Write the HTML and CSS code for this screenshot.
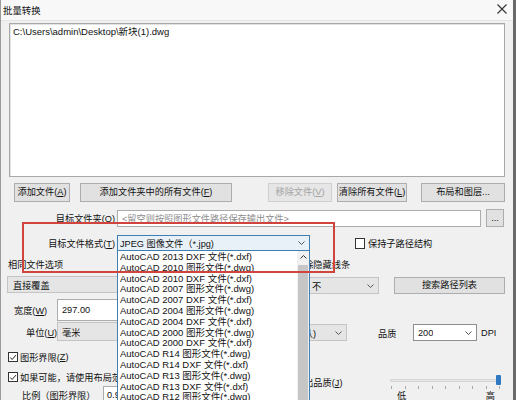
FILE: index.html
```html
<!DOCTYPE html>
<html lang="zh-CN">
<head>
<meta charset="utf-8">
<title>批量转换</title>
<link rel="stylesheet" href="styles.css">
</head>
<body>
<div class="win">
  <div class="titlebar">
    <span class="title">批量转换</span>
    <svg class="close" width="10" height="10" viewBox="0 0 10 10"><path d="M0.5 0.5 L9.5 9.5 M9.5 0.5 L0.5 9.5" stroke="#333" stroke-width="1.1" fill="none"/></svg>
  </div>

  <div class="filelist">
    <div class="file">C:\Users\admin\Desktop\新块(1).dwg</div>
  </div>

  <div class="btnrow">
    <button class="btn b1">添加文件(<u>A</u>)</button>
    <button class="btn b2">添加文件夹中的所有文件(<u>F</u>)</button>
    <button class="btn b3 disabled">移除文件(<u>V</u>)</button>
    <button class="btn b4">清除所有文件(<u>L</u>)</button>
    <button class="btn b5">布局和图层...</button>
  </div>

  <div class="row folder">
    <span class="lbl">目标文件夹(<u>O</u>)</span>
    <div class="input path">&lt;留空则按照图形文件路径保存输出文件&gt;</div>
    <button class="btn dots">...</button>
  </div>

  <div class="row format">
    <span class="lbl">目标文件格式(<u>T</u>)</span>
    <div class="fmtwrap">
      <div class="combo active">
        <span class="val">JPEG 图像文件（*.jpg)</span>
        <svg class="chev" width="7" height="4" viewBox="0 0 7 4"><path d="M0.5 0.5 L3.5 3.5 L6.5 0.5" stroke="#555" fill="none"/></svg>
      </div>
      <div class="dropdown">
        <div class="items">
          <div>AutoCAD 2013 DXF 文件(*.dxf)</div>
          <div>AutoCAD 2010 图形文件(*.dwg)</div>
          <div>AutoCAD 2010 DXF 文件(*.dxf)</div>
          <div>AutoCAD 2007 图形文件(*.dwg)</div>
          <div>AutoCAD 2007 DXF 文件(*.dxf)</div>
          <div>AutoCAD 2004 图形文件(*.dwg)</div>
          <div>AutoCAD 2004 DXF 文件(*.dxf)</div>
          <div>AutoCAD 2000 图形文件(*.dwg)</div>
          <div>AutoCAD 2000 DXF 文件(*.dxf)</div>
          <div>AutoCAD R14 图形文件(*.dwg)</div>
          <div>AutoCAD R14 DXF 文件(*.dxf)</div>
          <div>AutoCAD R13 图形文件(*.dwg)</div>
          <div>AutoCAD R13 DXF 文件(*.dxf)</div>
          <div>AutoCAD R12 图形文件(*.dwg)</div>
        </div>
        <div class="sbar">
          <svg class="up" width="7" height="4" viewBox="0 0 7 4"><path d="M0.5 3.5 L3.5 0.5 L6.5 3.5" stroke="#333" fill="none"/></svg>
          <div class="thumb"></div>
        </div>
      </div>
    </div>
    <label class="chk keep"><span class="box"></span>保持子路径结构</label>
  </div>

  <div class="lower">
    <div class="lcol">
      <div class="l1">相同文件选项</div>
      <div class="combo gray l2"><span class="val">直接覆盖</span></div>
      <div class="l3">
        <span class="lbl w">宽度(<u>W</u>)</span>
        <div class="input num">297.00</div>
      </div>
      <div class="l4">
        <span class="lbl u">单位(<u>U</u>)</span>
        <div class="combo gray unit"><span class="val">毫米</span>
          <svg class="chev" width="7" height="4" viewBox="0 0 7 4"><path d="M0.5 0.5 L3.5 3.5 L6.5 0.5" stroke="#555" fill="none"/></svg>
        </div>
      </div>
      <label class="chk l5"><span class="box on"><svg width="9" height="9" viewBox="0 0 9 9"><path d="M1.5 4.5 L3.5 6.8 L7.8 1.8" stroke="#222" stroke-width="1.1" fill="none"/></svg></span>图形界限(<u>Z</u>)</label>
      <label class="chk l6"><span class="box on"><svg width="9" height="9" viewBox="0 0 9 9"><path d="M1.5 4.5 L3.5 6.8 L7.8 1.8" stroke="#222" stroke-width="1.1" fill="none"/></svg></span>如果可能，请使用布局范围</label>
      <div class="l7">
        <span class="lbl s">比例（图形界限）</span>
        <div class="input scale">0.9</div>
      </div>
    </div>

    <div class="rcol">
      <div class="r1">消除隐藏线条</div>
      <div class="r2">
        <div class="combo gray hid"><span class="val">不</span>
          <svg class="chev" width="7" height="4" viewBox="0 0 7 4"><path d="M0.5 0.5 L3.5 3.5 L6.5 0.5" stroke="#555" fill="none"/></svg>
        </div>
        <button class="btn search">搜索路径列表</button>
      </div>
      <div class="r3">
        <div class="combo gray bg"><span class="val end"><span>白色(默认)</span></span>
          <svg class="chev" width="7" height="4" viewBox="0 0 7 4"><path d="M0.5 0.5 L3.5 3.5 L6.5 0.5" stroke="#555" fill="none"/></svg>
        </div>
        <span class="q">品质</span>
        <div class="combo white dpi"><span class="val">200</span>
          <svg class="chev" width="7" height="4" viewBox="0 0 7 4"><path d="M0.5 0.5 L3.5 3.5 L6.5 0.5" stroke="#555" fill="none"/></svg>
        </div>
        <span class="dpiu">DPI</span>
      </div>
      <div class="r4">
        <span class="ql">输出品质(<u>J</u>)</span>
        <div class="slider">
          <div class="track"></div>
          <div class="knob"></div>
          <div class="ticks"><i></i><i></i><i></i><i></i><i></i><i></i><i></i><i></i><i></i></div>
        </div>
      </div>
      <div class="r5"><span>低</span><span>高</span></div>
    </div>
  </div>

  <div class="annot"></div>
</div>
</body>
</html>
```

FILE: styles.css
```css
* { box-sizing: border-box; }
html, body { margin: 0; padding: 0; }
body {
  width: 516px; height: 400px; overflow: hidden;
  background: #f0f0f0;
  font-family: "Liberation Sans", "Noto Sans CJK SC", sans-serif;
  font-size: 9.2px; color: #111;
}
u { text-decoration: underline; text-underline-offset: 1px; }
.win {
  position: relative;
  width: 516px; height: 400px;
  border-left: 1px solid #9a9a9a;
  border-right: 3px solid #6a6a6a;
}
.titlebar {
  height: 21px; background: #f8f8f8;
  border-bottom: 1px solid #e4e4e4;
  display: flex; align-items: center; justify-content: space-between;
  padding: 0 6px 1px 2px;
}
.title { font-size: 9.4px; }
.close { margin-top: -2px; }

.filelist {
  margin: 2px 0 0 8px; width: 496px; height: 154px;
  background: #fff; border: 1px solid #a8a8a8;
  box-shadow: inset 1px 1px 0 #e2e2e2;
  padding: 2px 3px;
}
.file { line-height: 12px; font-size: 9.5px; }

.btnrow { display: flex; margin-top: 6px; height: 19px; }
.btn {
  font: inherit; color: #111; white-space: nowrap;
  background: #e1e1e1; border: 1px solid #adadad;
  padding: 0; height: 19px; line-height: 17px; text-align: center;
}
.b1 { margin-left: 13px; width: 56px; }
.b2 { margin-left: 10px; width: 152px; }
.b3 { margin-left: 36px; width: 64px; }
.b4 { margin-left: 5px; width: 70px; }
.b5 { margin-left: 14px; width: 84px; }
.disabled { color: #a3a3a3; border-color: #cfcfcf; background: #e6e6e6; }

.row { display: flex; align-items: center; }
.lbl { white-space: nowrap; }
.folder { margin-top: 7px; height: 18px; }
.folder .lbl { width: 115px; text-align: right; padding-right: 1px; }
.input {
  background: #fff; border: 1px solid #acacac;
  display: flex; align-items: center; padding-left: 4px;
  white-space: nowrap; overflow: hidden;
}
.path { width: 364px; height: 17px; color: #8d8d8d; margin-left: 1px; }
.dots { width: 18px; height: 18px; margin-left: 5px; line-height: 14px; }

.format { margin-top: 8px; height: 16px; }
.format .lbl { width: 115px; text-align: right; padding-right: 1px; }
.fmtwrap { position: relative; margin-left: 1px; width: 193px; height: 16px; z-index: 5; }
.combo {
  display: flex; align-items: center; justify-content: space-between;
  border: 1px solid #acacac; padding: 0 4px 0 4px; white-space: nowrap;
}
.combo .val { overflow: hidden; }
.combo.active { height: 16px; background: #e9f1f8; border-color: #3f7fb3; padding-left: 2px; }
.combo.gray { background: #e5e5e5; border-color: #c4c4c4; }
.combo.white { background: #fff; border-color: #8e8e8e; }

.dropdown {
  position: absolute; left: 0; top: 16px; width: 193px; height: 160px;
  background: #fff; border: 1px solid #3f7fb3; border-top: none;
  display: flex;
}
.items { flex: 1; padding: 1px 0 0 2px; font-size: 9.5px; }
.items div { height: 10.8px; line-height: 10.8px; white-space: nowrap; }
.sbar { width: 12px; background: #f0f0f0; display: flex; flex-direction: column; align-items: center; }
.up { margin-top: 4px; }
.thumb { margin-top: 6px; width: 10px; flex: 1; background: #c6c6c6; }

.chk { display: flex; align-items: center; white-space: nowrap; }
.box {
  width: 10px; height: 10px; border: 1px solid #333; background: #fff;
  display: inline-flex; align-items: center; justify-content: center; margin-right: 2px;
}
.box svg { display: block; }
.keep { margin-left: 45px; }
.keep .box { width: 10px; height: 11px; margin-right: 3px; }

.lower { display: grid; grid-template-columns: 239px 273px; }
.lcol, .rcol { display: flex; flex-direction: column; }

.l1 { margin: 7px 0 0 7px; height: 14px; line-height: 14px; }
.l2 { margin: 4px 0 0 6px; width: 160px; height: 17px; padding-left: 5px; }
.l3 { margin-top: 6px; height: 22px; display: flex; align-items: center; }
.lbl.w { margin-left: 13px; width: 43px; }
.num { margin-left: 0; width: 150px; height: 22px; padding-left: 4px; }
.l4 { margin-top: 1px; height: 19px; display: flex; align-items: center; }
.lbl.u { margin-left: 25px; width: 31px; }
.unit { width: 150px; height: 19px; }
.l5 { margin: 10px 0 0 7px; height: 12px; }
.l6 { margin: 8px 0 0 7px; height: 12px; }
.l7 { margin-top: 3px; height: 18px; display: flex; align-items: center; }
.lbl.s { margin-left: 21px; width: 81px; }
.scale { width: 100px; height: 18px; padding-left: 3px; }

.r1 { margin: 7px 0 0 55px; height: 14px; line-height: 14px; white-space: nowrap; }
.r2 { margin-top: 5px; height: 17px; display: flex; align-items: center; }
.hid { margin-left: 66px; width: 73px; height: 17px; padding-left: 5px; }
.search { margin-left: 15px; width: 111px; height: 17px; line-height: 15px; }
.r3 { margin-top: 30px; height: 17px; display: flex; align-items: center; }
.bg { width: 107px; height: 17px; padding-left: 0; }
.val.end { display: flex; justify-content: flex-end; width: 75px; }
.q { margin-left: 31px; width: 35px; }
.dpi { width: 64px; height: 17px; }
.dpiu { margin-left: 4px; }
.r4 { margin-top: 34px; height: 14px; display: flex; align-items: center; }
.ql { margin-left: 55px; width: 95px; white-space: nowrap; }
.slider { position: relative; width: 112px; height: 14px; }
.track { position: absolute; left: 0; top: 4px; width: 111px; height: 3px; background: #e7e7e7; border: 1px solid #d6d6d6; }
.knob { position: absolute; left: 106px; top: 0; width: 5px; height: 10px; background: #2f79c2; border-radius: 1px; }
.ticks { position: absolute; left: 1px; right: 2px; top: 11px; display: flex; justify-content: space-between; }
.ticks i { display: block; width: 1px; height: 3px; background: #a8a8a8; }
.r5 { margin: 2px 0 0 157px; width: 98px; display: flex; justify-content: space-between; line-height: 10px; }

.annot {
  position: absolute; left: 21px; top: 222px; width: 313px; height: 51px;
  border: 2px solid #d0443d; z-index: 10; pointer-events: none;
}
```
